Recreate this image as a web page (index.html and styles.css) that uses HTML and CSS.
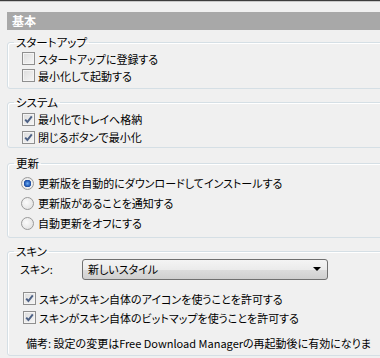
FILE: index.html
```html
<!DOCTYPE html>
<html lang="ja">
<head>
  <meta charset="UTF-8">
  <meta name="viewport" content="width=device-width, initial-scale=1.0">
  <title>設定 - 基本</title>
  <link rel="stylesheet" href="styles.css">
</head>
<body>
  <div class="topline"></div>
  <div id="page">
    <div class="header">基本</div>

    <fieldset class="group group-startup">
      <legend>スタートアップ</legend>
      <div class="row"><span class="check"></span>スタートアップに登録する</div>
      <div class="row"><span class="check"></span>最小化して起動する</div>
    </fieldset>

    <fieldset class="group group-system">
      <legend>システム</legend>
      <div class="row"><span class="check checked"><svg viewBox="0 0 11 11" width="11" height="11"><path d="M2.2 5.6 L4.4 8 L8.8 2.4" /></svg></span>最小化でトレイへ格納</div>
      <div class="row"><span class="check checked"><svg viewBox="0 0 11 11" width="11" height="11"><path d="M2.2 5.6 L4.4 8 L8.8 2.4" /></svg></span>閉じるボタンで最小化</div>
    </fieldset>

    <fieldset class="group group-update">
      <legend>更新</legend>
      <div class="row"><span class="radio selected"></span>更新版を自動的にダウンロードしてインストールする</div>
      <div class="row"><span class="radio"></span>更新版があることを通知する</div>
      <div class="row"><span class="radio"></span>自動更新をオフにする</div>
    </fieldset>

    <fieldset class="group group-skin">
      <legend>スキン</legend>
      <div class="skin-row">
        <span class="skin-label">スキン:</span>
        <div class="select">
          <span>新しいスタイル</span>
          <span class="arrow"></span>
        </div>
      </div>
      <div class="row"><span class="check checked"><svg viewBox="0 0 11 11" width="11" height="11"><path d="M2.2 5.6 L4.4 8 L8.8 2.4" /></svg></span>スキンがスキン自体のアイコンを使うことを許可する</div>
      <div class="row"><span class="check checked"><svg viewBox="0 0 11 11" width="11" height="11"><path d="M2.2 5.6 L4.4 8 L8.8 2.4" /></svg></span>スキンがスキン自体のビットマップを使うことを許可する</div>
      <div class="note">備考: 設定の変更はFree Download Managerの再起動後に有効になりま</div>
    </fieldset>
  </div>
</body>
</html>
```

FILE: styles.css
```css
html, body {
  margin: 0;
  padding: 0;
}

body {
  width: 380px;
  height: 358px;
  overflow: hidden;
  background-color: #f0f0f0;
  color: #000;
  font-family: "Noto Sans CJK JP", "Liberation Sans", sans-serif;
  font-size: 11px;
  font-feature-settings: "palt";
}

.topline {
  height: 1px;
  border-top: 1px solid #3c3c3c;
  background-color: #c8c8c8;
}

#page {
  padding-left: 7px;
}

.header {
  margin-top: 10px;
  height: 18px;
  line-height: 18px;
  padding-left: 5px;
  background-color: #a8a8a8;
  color: #fff;
  font-weight: bold;
  font-size: 12px;
}

.group {
  margin: 5px -20px 0 0;
  padding: 1px 0 4px 14px;
  border: 1px solid #d5dfe5;
  border-radius: 3px;
  box-shadow: inset 1px 1px 0 #fff;
}

.group legend {
  margin-left: -8px;
  padding: 0 2px;
  line-height: 14px;
  font-size: 11.5px;
}

.row {
  display: flex;
  align-items: center;
  height: 17px;
  white-space: nowrap;
}

.group-system {
  margin-top: 6px;
  padding-bottom: 1px;
}

.group-system .row {
  height: 18px;
}

.group-update {
  margin-top: 8px;
  padding-top: 3px;
  padding-bottom: 4px;
}

.group-update .row {
  height: 20px;
  margin-left: -1px;
}

.group-skin {
  margin-top: 6px;
  padding-top: 0;
  padding-bottom: 3px;
}

.group-skin .row {
  height: 19px;
  margin-left: 1px;
}

.check {
  box-sizing: border-box;
  width: 13px;
  height: 13px;
  margin-right: 3px;
  flex: none;
  border: 1px solid #8f8f8f;
  background: linear-gradient(135deg, #dcdcdc, #f6f6f6);
  box-shadow: inset 0 0 0 1px #f4f4f4;
}

.check svg {
  display: block;
}

.check path {
  fill: none;
  stroke: #4d6185;
  stroke-width: 2;
}

.radio {
  box-sizing: border-box;
  width: 13px;
  height: 13px;
  margin-right: 4px;
  flex: none;
  border: 1px solid #9a9a9a;
  border-radius: 50%;
  background: radial-gradient(circle at 40% 40%, #fbfbfb, #dcdcdc);
}

.radio.selected {
  background: radial-gradient(circle at 50% 50%, #6fb0f0 0, #2a62c0 2.5px, #1c4c9c 3.5px, #f0f0f0 4px, #e4e4e4 6px);
}

.skin-row {
  display: flex;
  align-items: center;
  height: 22px;
  margin-left: -2px;
  margin-bottom: 9px;
}

.skin-label {
  width: 62px;
}

.select {
  box-sizing: border-box;
  display: flex;
  align-items: center;
  justify-content: space-between;
  width: 246px;
  height: 21px;
  padding: 0 6px 0 5px;
  border: 1px solid #707070;
  border-radius: 3px;
  background: linear-gradient(#f4f4f4, #ebebeb 50%, #dcdcdc 51%, #cfcfcf);
}

.arrow {
  width: 0;
  height: 0;
  border-left: 4px solid transparent;
  border-right: 4px solid transparent;
  border-top: 4px solid #000;
}

.note {
  margin: 7px 0 0 4px;
  height: 18px;
  line-height: 18px;
  white-space: nowrap;
}
```
